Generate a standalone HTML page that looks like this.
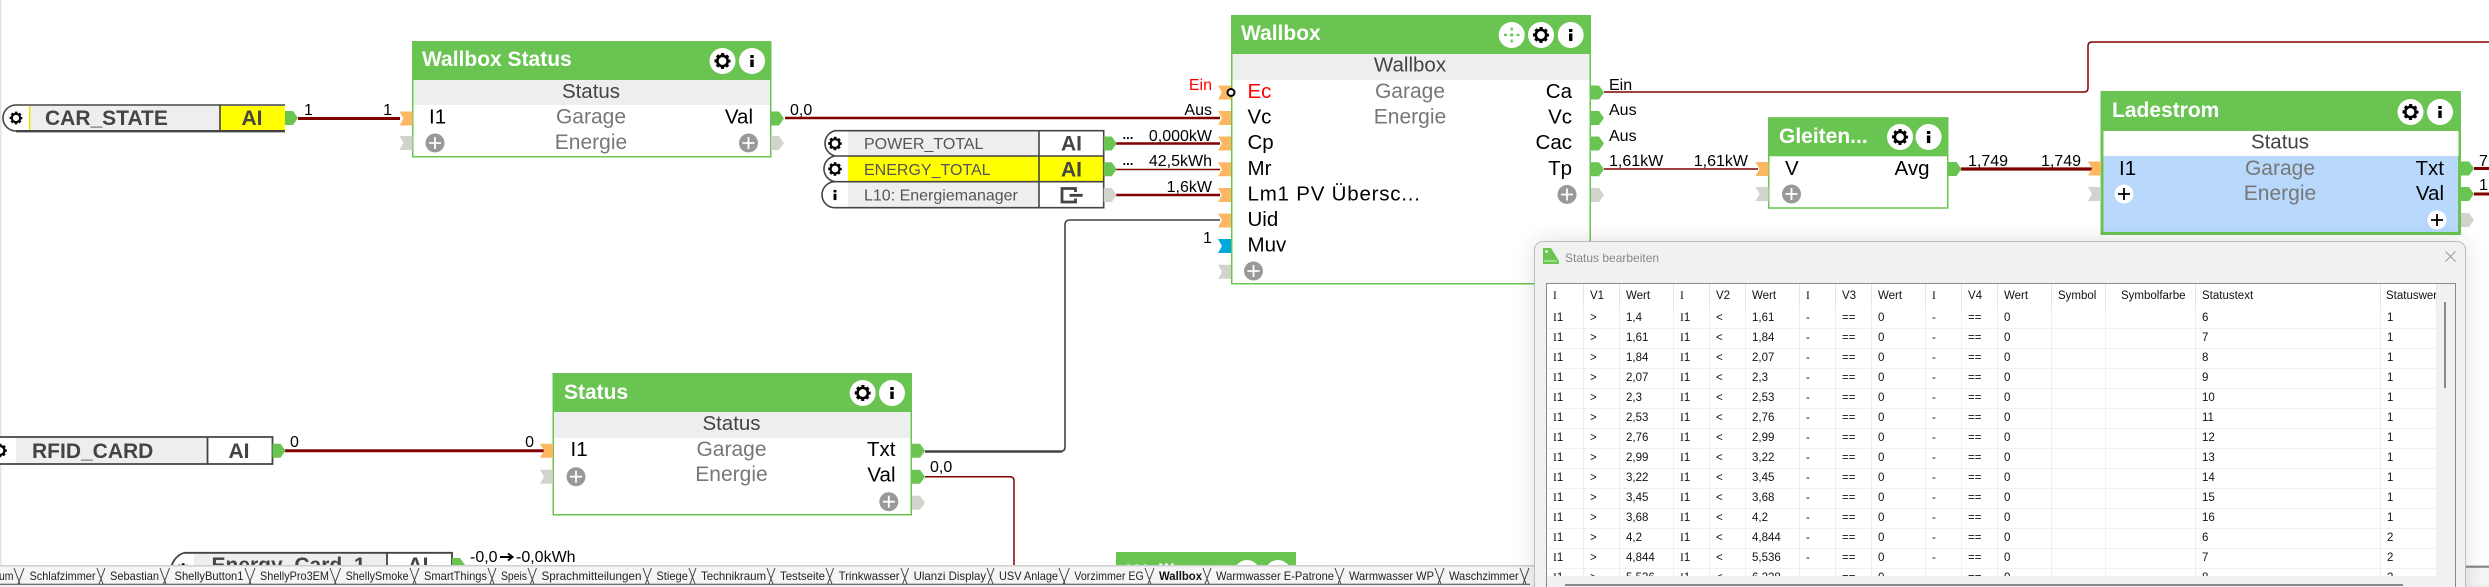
<!DOCTYPE html>
<html lang="de">
<head>
<meta charset="utf-8">
<title>Wallbox</title>
<style>
html,body{margin:0;padding:0;background:#fff;width:2489px;height:587px;overflow:hidden}
body{position:relative;font-family:"Liberation Sans",sans-serif}
svg.main{position:absolute;left:0;top:0}
svg text{font-family:"Liberation Sans",sans-serif}
.t{font-size:21px;font-weight:bold;fill:#fff}
.p{font-size:20.5px;fill:#000}
.g{font-size:21px;fill:#777;text-anchor:middle}
.s{font-size:20.5px;fill:#444;text-anchor:middle}
.r{text-anchor:end}
.l{font-size:16px;fill:#000}
.n{font-size:21px;font-weight:bold;fill:#444}
.m{font-size:16px;fill:#555}
.a{font-size:21px;font-weight:bold;fill:#444;text-anchor:middle}
.tb{font-size:12px;fill:#222}
.w{fill:none;stroke:#800000}
#dlg{position:absolute;left:1534px;top:241px;width:930px;height:360px;background:#f1f1f1;border:1px solid #bdbdbd;border-radius:9px;box-shadow:0 0 22px rgba(0,0,0,.13);z-index:2}
#ttl{position:absolute;left:30px;top:8px;font-size:12px;line-height:16px;color:#888}
#box{position:absolute;left:11px;top:41px;width:908px;height:320px;background:#fff;border:1px solid #8a8a96;overflow:hidden}
#clip{position:absolute;left:0;top:0;width:890px;height:292px;overflow:hidden}
table{border-collapse:separate;border-spacing:0;table-layout:fixed;width:890px;font-size:11.5px;color:#111}
td,th{padding:0 0 0 6px;height:19px;border-right:1px solid #f0f0f3;border-bottom:1px solid #f0f0f3;text-align:left;font-weight:normal;white-space:nowrap;overflow:hidden;line-height:19px}
th{height:25px;line-height:25px;border-bottom:0;border-right:1px solid #e6e6e6}
i{font-family:"Liberation Serif",serif;font-style:normal}
#vs{position:absolute;left:890px;top:0;width:18px;height:320px;background:#f1f1f1}
#vt{position:absolute;left:7px;top:18px;width:2px;height:86px;background:#8a8a8a}
#hs{position:absolute;left:0;top:292px;width:890px;height:30px;background:#f1f1f1}
#ht{position:absolute;left:18px;top:8px;width:838px;height:2px;background:#888}
</style>
</head>
<body>
<svg class="main" width="2489" height="587" viewBox="0 0 2489 587" xmlns="http://www.w3.org/2000/svg">
<defs>
<g id="gear"><circle r="6.5" fill="none" stroke="#000" stroke-width="3" stroke-dasharray="2.9 2.2" stroke-dashoffset="1.45"/><circle r="5.2" fill="none" stroke="#000" stroke-width="2.600"/></g>
<g id="ginfo"><rect x="-1.7" y="-6" width="3.4" height="3" fill="#000"/><rect x="-1.7" y="-1.5" width="3.4" height="7.5" fill="#000"/></g>
<g id="cg"><circle r="13" fill="#fff"/><use href="#gear"/></g>
<g id="ci"><circle r="13" fill="#fff"/><use href="#ginfo"/></g>
<polygon id="pi" points="0,-7 13,-7 13,7 0,7 4,0"/>
<polygon id="po" points="0,-7 8,-7 13,0 8,7 0,7"/>
<g id="pl"><circle r="9.5" fill="#999"/><path d="M-6 0H6M0-6V6" stroke="#fff" stroke-width="1.8"/></g>
<g id="pw"><circle r="9.5" fill="#fff"/><path d="M-6 0H6M0-6V6" stroke="#000" stroke-width="1.8"/></g>
</defs>

<rect x="0" y="0" width="1.5" height="565" fill="#e4e4e4"/>

<!-- wires -->
<g class="w">
<path d="M298 118.5H400" stroke-width="3"/>
<path d="M785 118H1220" stroke-width="2.6"/>
<path d="M1116 143.5H1220" stroke-width="2.6"/>
<path d="M1116 169.5H1220" stroke-width="1.5"/>
<path d="M1116 195H1220" stroke-width="2.6"/>
<path d="M1604 92H2084Q2088 92 2088 88V46Q2088 42 2092 42H2489" stroke-width="1.5"/>
<path d="M1604 169H1758" stroke-width="1.5"/>
<path d="M1961 169H2092" stroke-width="3.2"/>
<path d="M2474 168.500H2489" stroke-width="3"/>
<path d="M2474 194H2489" stroke-width="3"/>
<path d="M285 450.700H545" stroke-width="3"/>
<path d="M925 476.700H1010Q1014 476.700 1014 481V566" stroke-width="1.5"/>
</g>
<path d="M925 451.500H1060Q1065 451.500 1065 447V225Q1065 220 1070 220H1220" fill="none" stroke="#444" stroke-width="1.6"/>
<path d="M925 451.500H1062" fill="none" stroke="#444" stroke-width="2.6"/>

<!-- CAR_STATE -->
<path d="M16 105H285V131H16A13 13 0 0 1 16 105Z" fill="#fff"/>
<rect x="29" y="106" width="191" height="24" fill="#eee"/>
<rect x="29" y="106" width="1.500" height="24" fill="#e8e800"/>
<rect x="220" y="106" width="65" height="24" fill="#ff0"/>
<path d="M16 105H285M285 131H16A13 13 0 0 1 16 105M220 105V131" fill="none" stroke="#444" stroke-width="1.6"/>
<path d="M16 131.200H285" stroke="#444" stroke-width="2.4"/>
<g transform="translate(16 118) scale(.8)"><use href="#gear"/></g>
<text class="n" x="45" y="125">CAR_STATE</text>
<text class="a" x="252" y="125">AI</text>
<use href="#po" x="285" y="118" fill="#6ac452"/>
<text class="l" x="304" y="115">1</text>
<text class="l r" x="392" y="115">1</text>

<!-- Wallbox Status -->
<rect x="412.750" y="41.750" width="358" height="115" fill="#fff" stroke="#6ac452" stroke-width="1.500"/>
<rect x="412" y="41" width="359.500" height="39" fill="#6ac452"/>
<rect x="413.500" y="80" width="356.500" height="25" fill="#eee"/>
<text class="t" x="422" y="66">Wallbox Status</text>
<use href="#cg" x="722.500" y="61"/><use href="#ci" x="752" y="61"/>
<text class="s" x="591" y="98">Status</text>
<text class="g" x="591" y="123.500">Garage</text>
<text class="g" x="591" y="149">Energie</text>
<text class="p" x="429" y="123.500">I1</text>
<text class="p r" x="753" y="123.500">Val</text>
<use href="#pl" x="435" y="143"/><use href="#pl" x="748.500" y="143"/>
<use href="#pi" x="399.500" y="118.500" fill="#fdb762"/>
<use href="#pi" x="399.500" y="143" fill="#d3d3ce"/>
<use href="#po" x="771" y="118.500" fill="#6ac452"/>
<use href="#po" x="771" y="143" fill="#d3d3ce"/>
<text class="l" x="790" y="115">0,0</text>

<!-- IO blocks -->
<path d="M835 130.700H1103.700V207.700H835A13 13 0 0 1 835 181.700A13 13 0 0 1 835 156A13 13 0 0 1 835 130.700Z" fill="#fff"/>
<rect x="848" y="131.500" width="191" height="24.500" fill="#eee"/>
<rect x="848" y="156" width="255.700" height="25.700" fill="#ff0"/>
<rect x="848" y="181.700" width="191" height="26" fill="#eee"/>
<path d="M835 130.700H1103.700V207.700H835A13 13 0 0 1 835 181.700A13 13 0 0 1 835 156A13 13 0 0 1 835 130.700ZM835 156H1103.700M835 181.700H1103.700M1039 130.700V207.700" fill="none" stroke="#444" stroke-width="1.600"/>
<g transform="translate(835 143.500) scale(.85)"><use href="#gear"/></g>
<g transform="translate(835 169) scale(.85)"><use href="#gear"/></g>
<g transform="translate(835 195) scale(.85)"><use href="#ginfo"/></g>
<text class="m" x="864" y="149">POWER_TOTAL</text>
<text class="m" x="864" y="175">ENERGY_TOTAL</text>
<text class="m" x="864" y="200.500">L10: Energiemanager</text>
<text class="a" x="1071.500" y="150.500">AI</text>
<text class="a" x="1071.500" y="176.500">AI</text>
<path d="M1075.500 192V188.500H1062V202H1075.500V198.500M1069.500 195.300H1082.700" fill="none" stroke="#444" stroke-width="2.800"/>
<use href="#po" x="1103.700" y="143.500" fill="#6ac452"/>
<use href="#po" x="1103.700" y="169.300" fill="#6ac452"/>
<use href="#po" x="1103.700" y="195" fill="#d3d3ce"/>
<text x="1122.500" y="139" font-size="13" font-weight="bold">...</text>
<text x="1122.500" y="165" font-size="13" font-weight="bold">...</text>

<!-- Wallbox -->
<rect x="1231.750" y="15.750" width="358.500" height="268" fill="#fff" stroke="#6ac452" stroke-width="1.500"/>
<rect x="1231" y="15" width="360" height="39" fill="#6ac452"/>
<rect x="1232.500" y="54" width="357" height="26" fill="#eee"/>
<text class="t" x="1241" y="40">Wallbox</text>
<circle cx="1511.700" cy="35" r="13" fill="#fff"/>
<path d="M1511.700 27.500v3M1511.700 39.500v3M1504 35h3M1516.500 35h3M1511.700 33.500v3M1510.200 35h3" stroke="#6ac452" stroke-width="2.200" fill="none"/>
<use href="#cg" x="1541" y="35"/><use href="#ci" x="1570.700" y="35"/>
<text class="s" x="1410" y="71.500">Wallbox</text>
<text class="g" x="1410" y="98">Garage</text>
<text class="g" x="1410" y="123.500">Energie</text>
<text class="p" x="1247.500" y="98" style="fill:#f00">Ec</text>
<text class="p" x="1247.500" y="123.500">Vc</text>
<text class="p" x="1247.500" y="149">Cp</text>
<text class="p" x="1247.500" y="175">Mr</text>
<text class="p" x="1247.500" y="200.500" textLength="172.500" lengthAdjust="spacing">Lm1 PV Übersc...</text>
<text class="p" x="1247.500" y="226">Uid</text>
<text class="p" x="1247.500" y="251.500">Muv</text>
<text class="p r" x="1572" y="98">Ca</text>
<text class="p r" x="1572" y="123.500">Vc</text>
<text class="p r" x="1572" y="149">Cac</text>
<text class="p r" x="1572" y="175">Tp</text>
<use href="#pl" x="1253.500" y="271"/><use href="#pl" x="1567" y="194.500"/>
<use href="#pi" x="1218" y="92.500" fill="#fdb762"/>
<use href="#pi" x="1218" y="118" fill="#fdb762"/>
<use href="#pi" x="1218" y="143.500" fill="#fdb762"/>
<use href="#pi" x="1218" y="169.300" fill="#fdb762"/>
<use href="#pi" x="1218" y="195" fill="#fdb762"/>
<use href="#pi" x="1218" y="220.500" fill="#fdb762"/>
<use href="#pi" x="1218" y="246" fill="#00a9dc"/>
<use href="#pi" x="1218" y="271.700" fill="#d3d3ce"/>
<circle cx="1231" cy="92.500" r="3.500" fill="#fff" stroke="#000" stroke-width="2"/>
<use href="#po" x="1591" y="92.500" fill="#6ac452"/>
<use href="#po" x="1591" y="118" fill="#6ac452"/>
<use href="#po" x="1591" y="143.500" fill="#6ac452"/>
<use href="#po" x="1591" y="169.300" fill="#6ac452"/>
<use href="#po" x="1591" y="195" fill="#d3d3ce"/>
<text class="l r" x="1212" y="90" style="fill:#f00">Ein</text>
<text class="l r" x="1212" y="115">Aus</text>
<text class="l r" x="1212" y="141">0,000kW</text>
<text class="l r" x="1212" y="166">42,5kWh</text>
<text class="l r" x="1212" y="192">1,6kW</text>
<text class="l" x="1203" y="243">1</text>
<text class="l" x="1609" y="90">Ein</text>
<text class="l" x="1609" y="115">Aus</text>
<text class="l" x="1609" y="141">Aus</text>
<text class="l" x="1609" y="166">1,61kW</text>

<!-- Gleiten -->
<rect x="1768.750" y="118" width="179" height="90" fill="#fff" stroke="#6ac452" stroke-width="1.500"/>
<rect x="1768" y="117.300" width="180.500" height="39" fill="#6ac452"/>
<text class="t" x="1779" y="143">Gleiten...</text>
<use href="#cg" x="1900" y="137"/><use href="#ci" x="1928.600" y="137"/>
<text class="p" x="1785" y="175">V</text>
<text class="p r" x="1929.500" y="175">Avg</text>
<use href="#pl" x="1791.500" y="194"/>
<use href="#pi" x="1755.500" y="169" fill="#fdb762"/>
<use href="#pi" x="1755.500" y="194" fill="#d3d3ce"/>
<use href="#po" x="1948.500" y="169" fill="#6ac452"/>
<text class="l r" x="1748" y="166">1,61kW</text>
<text class="l" x="1968" y="166">1,749</text>
<text class="l r" x="2081" y="166">1,749</text>

<!-- Ladestrom -->
<rect x="2102" y="92.500" width="357.500" height="141" fill="#b8d9fc" stroke="#6ac452" stroke-width="3"/>
<rect x="2100.500" y="91" width="360.500" height="40" fill="#6ac452"/>
<rect x="2103.500" y="131" width="355" height="25" fill="#fff"/>
<text class="t" x="2112" y="117">Ladestrom</text>
<use href="#cg" x="2410.500" y="112"/><use href="#ci" x="2440" y="112"/>
<text class="s" x="2280" y="148.500">Status</text>
<text class="g" x="2280" y="175">Garage</text>
<text class="g" x="2280" y="200">Energie</text>
<text class="p" x="2119" y="175">I1</text>
<text class="p r" x="2444" y="175">Txt</text>
<text class="p r" x="2444" y="200">Val</text>
<use href="#pw" x="2124" y="194"/><use href="#pw" x="2437" y="220"/>
<use href="#pi" x="2088" y="168.500" fill="#fdb762"/>
<use href="#pi" x="2088" y="194" fill="#d3d3ce"/>
<use href="#po" x="2461" y="168.500" fill="#6ac452"/>
<use href="#po" x="2461" y="194" fill="#6ac452"/>
<use href="#po" x="2461" y="220" fill="#d3d3ce"/>
<text class="l" x="2479" y="166">7</text>
<text class="l" x="2479" y="190">1</text>

<!-- RFID_CARD -->
<path d="M-14 437H272.500V464H-14Z" fill="#fff"/>
<rect x="16" y="438" width="191.500" height="25" fill="#eee"/>
<path d="M0 437H272.500V464H0M207.500 437V464" fill="none" stroke="#444" stroke-width="1.800"/>
<g transform="translate(0 450.500) scale(.85)"><use href="#gear"/></g>
<text class="n" x="32" y="458">RFID_CARD</text>
<text class="a" x="239" y="458">AI</text>
<use href="#po" x="272.500" y="450.700" fill="#6ac452"/>
<text class="l" x="290" y="447">0</text>
<text class="l r" x="534" y="447">0</text>

<!-- Status -->
<rect x="553.250" y="373.750" width="358" height="141" fill="#fff" stroke="#6ac452" stroke-width="1.500"/>
<rect x="552.500" y="373" width="359.500" height="39" fill="#6ac452"/>
<rect x="554" y="412" width="356.500" height="26" fill="#eee"/>
<text class="t" x="564" y="399">Status</text>
<use href="#cg" x="862.700" y="393"/><use href="#ci" x="892" y="393"/>
<text class="s" x="731.500" y="430">Status</text>
<text class="g" x="731.500" y="456">Garage</text>
<text class="g" x="731.500" y="481">Energie</text>
<text class="p" x="570.500" y="456">I1</text>
<text class="p r" x="895.500" y="456">Txt</text>
<text class="p r" x="895.500" y="481.500">Val</text>
<use href="#pl" x="576" y="476.700"/><use href="#pl" x="888.800" y="501.700"/>
<use href="#pi" x="540" y="450.700" fill="#fdb762"/>
<use href="#pi" x="540" y="476.700" fill="#d3d3ce"/>
<use href="#po" x="912" y="450.700" fill="#6ac452"/>
<use href="#po" x="912" y="476.700" fill="#6ac452"/>
<use href="#po" x="912" y="502.700" fill="#d3d3ce"/>
<text class="l" x="930" y="472">0,0</text>

<!-- Energy_Card_1 (clipped by tabs) -->
<path d="M184 552H452V590H184A19 19 0 0 1 184 552Z" fill="#fff"/>
<rect x="194" y="553" width="193" height="30" fill="#eee"/>
<path d="M184 552.800H452V590M387 552V590M184 552.800A19 19 0 0 0 171 572" fill="none" stroke="#444" stroke-width="1.800"/>
<g transform="translate(183 570) scale(.85)"><use href="#gear"/></g>
<text class="n" x="211.500" y="572">Energy_Card_1</text>
<text class="a" x="418" y="572">AI</text>
<use href="#po" x="452" y="565" fill="#6ac452"/>
<text class="l" x="470" y="562">-0,0</text>
<path d="M500 557H511M508 553.500L512.500 557L508 560.500" stroke="#000" stroke-width="2" fill="none"/>
<text class="l" x="516" y="562">-0,0kWh</text>

<!-- Lower green block (clipped by tabs) -->
<rect x="1116" y="552" width="180" height="20" fill="#6ac452"/>
<circle cx="1247" cy="573" r="13" fill="#fff"/><circle cx="1278" cy="573" r="13" fill="#fff"/>
<text class="t" x="1127" y="579">Wallbox</text>

<!-- Tabs -->
<rect x="0" y="565" width="2489" height="22" fill="#f5f5f5"/>
<rect x="0" y="584.500" width="2489" height="3" fill="#efefef"/>
<rect x="0" y="565" width="2489" height="1.500" fill="#cfcfcf"/>
<path d="M0 584.300H1530M2465 567H2489" stroke="#444" stroke-width="1" fill="none"/>
<path d="M14 568L20 584M18 584L24 568M97 568L103 584M99 584L105 568M160 568L166 584M163.500 584L169.500 568M245 568L251 584M249 584L255 568M330 568L336 584M334.600 584L340.600 568M410 568L416 584M413 584L419 568M488 568L494 584M490 584L496 568M528 568L534 584M530.500 584L536.500 568M643 568L649 584M645.400 584L651.400 568M689 568L695 584M690 584L696 568M767 568L773 584M769 584L775 568M826 568L832 584M827.600 584L833.600 568M901 568L907 584M902.600 584L908.600 568M987 568L993 584M988 584L994 568M1059 568L1065 584M1063.300 584L1069.300 568M1145 568L1151 584M1148 584L1154 568M1203 568L1209 584M1205 584L1211 568M1335 568L1341 584M1338 584L1344 568M1435 568L1441 584M1438 584L1444 568M1520 568L1526 584M1523 584L1529 568" stroke="#444" stroke-width="1" fill="none"/>
<g class="tb">
<text x="-1" y="580" class="tb" textLength="14.500" lengthAdjust="spacingAndGlyphs">um</text>
<text x="29.500" y="580" class="tb" textLength="66" lengthAdjust="spacingAndGlyphs">Schlafzimmer</text>
<text x="110" y="580" class="tb" textLength="49" lengthAdjust="spacingAndGlyphs">Sebastian</text>
<text x="174.500" y="580" class="tb" textLength="69" lengthAdjust="spacingAndGlyphs">ShellyButton1</text>
<text x="260" y="580" class="tb" textLength="69" lengthAdjust="spacingAndGlyphs">ShellyPro3EM</text>
<text x="345.600" y="580" class="tb" textLength="63" lengthAdjust="spacingAndGlyphs">ShellySmoke</text>
<text x="424" y="580" class="tb" textLength="63" lengthAdjust="spacingAndGlyphs">SmartThings</text>
<text x="501" y="580" class="tb" textLength="26" lengthAdjust="spacingAndGlyphs">Speis</text>
<text x="541.500" y="580" class="tb" textLength="100" lengthAdjust="spacingAndGlyphs">Sprachmitteilungen</text>
<text x="656.400" y="580" class="tb" textLength="31.500" lengthAdjust="spacingAndGlyphs">Stiege</text>
<text x="701" y="580" class="tb" textLength="65" lengthAdjust="spacingAndGlyphs">Technikraum</text>
<text x="780" y="580" class="tb" textLength="45" lengthAdjust="spacingAndGlyphs">Testseite</text>
<text x="838.600" y="580" class="tb" textLength="61" lengthAdjust="spacingAndGlyphs">Trinkwasser</text>
<text x="913.600" y="580" class="tb" textLength="72.500" lengthAdjust="spacingAndGlyphs">Ulanzi Display</text>
<text x="999" y="580" class="tb" textLength="59" lengthAdjust="spacingAndGlyphs">USV Anlage</text>
<text x="1074.300" y="580" class="tb" textLength="69.500" lengthAdjust="spacingAndGlyphs">Vorzimmer EG</text>
<text x="1159" y="580" class="tb" font-weight="bold" textLength="43" lengthAdjust="spacingAndGlyphs" style="fill:#111">Wallbox</text>
<text x="1216" y="580" class="tb" textLength="118" lengthAdjust="spacingAndGlyphs">Warmwasser E-Patrone</text>
<text x="1349" y="580" class="tb" textLength="85" lengthAdjust="spacingAndGlyphs">Warmwasser WP</text>
<text x="1449" y="580" class="tb" textLength="69.700" lengthAdjust="spacingAndGlyphs">Waschzimmer</text>
</g>
</svg>

<div id="dlg">
<svg style="position:absolute;left:8px;top:6px" width="16" height="16" viewBox="0 0 16 16"><path d="M0 0H8L16 13V16H0Z" fill="#6ac452"/><circle cx="3.500" cy="3.500" r="1.300" fill="#fff"/><rect x="1" y="12.500" width="13" height="1" fill="#d8f0d0"/></svg>
<div id="ttl">Status bearbeiten</div>
<svg style="position:absolute;left:910px;top:9px" width="11" height="11" viewBox="0 0 11 11"><path d="M.5.500L10.500 10.500M10.500.500L.5 10.500" stroke="#999" stroke-width="1" fill="none"/></svg>
<div id="box">
<div id="clip">
<table>
<colgroup><col style="width:37px"><col style="width:36px"><col style="width:54px"><col style="width:36px"><col style="width:36px"><col style="width:54px"><col style="width:36px"><col style="width:36px"><col style="width:54px"><col style="width:36px"><col style="width:36px"><col style="width:54px"><col style="width:54px"><col style="width:90px"><col style="width:185px"><col style="width:56px"></colgroup>
<tr><th><i>I</i></th><th>V1</th><th>Wert</th><th><i>I</i></th><th>V2</th><th>Wert</th><th><i>I</i></th><th>V3</th><th>Wert</th><th><i>I</i></th><th>V4</th><th>Wert</th><th>Symbol</th><th style="padding-left:15px">Symbolfarbe</th><th>Statustext</th><th style="padding-left:5px">Statuswert</th></tr>
<tr><td><i>I</i>1</td><td>&gt;</td><td>1,4</td><td><i>I</i>1</td><td>&lt;</td><td>1,61</td><td>-</td><td>==</td><td>0</td><td>-</td><td>==</td><td>0</td><td></td><td></td><td>6</td><td>1</td></tr>
<tr><td><i>I</i>1</td><td>&gt;</td><td>1,61</td><td><i>I</i>1</td><td>&lt;</td><td>1,84</td><td>-</td><td>==</td><td>0</td><td>-</td><td>==</td><td>0</td><td></td><td></td><td>7</td><td>1</td></tr>
<tr><td><i>I</i>1</td><td>&gt;</td><td>1,84</td><td><i>I</i>1</td><td>&lt;</td><td>2,07</td><td>-</td><td>==</td><td>0</td><td>-</td><td>==</td><td>0</td><td></td><td></td><td>8</td><td>1</td></tr>
<tr><td><i>I</i>1</td><td>&gt;</td><td>2,07</td><td><i>I</i>1</td><td>&lt;</td><td>2,3</td><td>-</td><td>==</td><td>0</td><td>-</td><td>==</td><td>0</td><td></td><td></td><td>9</td><td>1</td></tr>
<tr><td><i>I</i>1</td><td>&gt;</td><td>2,3</td><td><i>I</i>1</td><td>&lt;</td><td>2,53</td><td>-</td><td>==</td><td>0</td><td>-</td><td>==</td><td>0</td><td></td><td></td><td>10</td><td>1</td></tr>
<tr><td><i>I</i>1</td><td>&gt;</td><td>2,53</td><td><i>I</i>1</td><td>&lt;</td><td>2,76</td><td>-</td><td>==</td><td>0</td><td>-</td><td>==</td><td>0</td><td></td><td></td><td>11</td><td>1</td></tr>
<tr><td><i>I</i>1</td><td>&gt;</td><td>2,76</td><td><i>I</i>1</td><td>&lt;</td><td>2,99</td><td>-</td><td>==</td><td>0</td><td>-</td><td>==</td><td>0</td><td></td><td></td><td>12</td><td>1</td></tr>
<tr><td><i>I</i>1</td><td>&gt;</td><td>2,99</td><td><i>I</i>1</td><td>&lt;</td><td>3,22</td><td>-</td><td>==</td><td>0</td><td>-</td><td>==</td><td>0</td><td></td><td></td><td>13</td><td>1</td></tr>
<tr><td><i>I</i>1</td><td>&gt;</td><td>3,22</td><td><i>I</i>1</td><td>&lt;</td><td>3,45</td><td>-</td><td>==</td><td>0</td><td>-</td><td>==</td><td>0</td><td></td><td></td><td>14</td><td>1</td></tr>
<tr><td><i>I</i>1</td><td>&gt;</td><td>3,45</td><td><i>I</i>1</td><td>&lt;</td><td>3,68</td><td>-</td><td>==</td><td>0</td><td>-</td><td>==</td><td>0</td><td></td><td></td><td>15</td><td>1</td></tr>
<tr><td><i>I</i>1</td><td>&gt;</td><td>3,68</td><td><i>I</i>1</td><td>&lt;</td><td>4,2</td><td>-</td><td>==</td><td>0</td><td>-</td><td>==</td><td>0</td><td></td><td></td><td>16</td><td>1</td></tr>
<tr><td><i>I</i>1</td><td>&gt;</td><td>4,2</td><td><i>I</i>1</td><td>&lt;</td><td>4,844</td><td>-</td><td>==</td><td>0</td><td>-</td><td>==</td><td>0</td><td></td><td></td><td>6</td><td>2</td></tr>
<tr><td><i>I</i>1</td><td>&gt;</td><td>4,844</td><td><i>I</i>1</td><td>&lt;</td><td>5,536</td><td>-</td><td>==</td><td>0</td><td>-</td><td>==</td><td>0</td><td></td><td></td><td>7</td><td>2</td></tr>
<tr><td><i>I</i>1</td><td>&gt;</td><td>5,536</td><td><i>I</i>1</td><td>&lt;</td><td>6,228</td><td>-</td><td>==</td><td>0</td><td>-</td><td>==</td><td>0</td><td></td><td></td><td>8</td><td>2</td></tr>
</table>
</div>
<div id="vs"><div id="vt"></div></div>
<div id="hs"><div id="ht"></div></div>
</div>
</div>
</body>
</html>
